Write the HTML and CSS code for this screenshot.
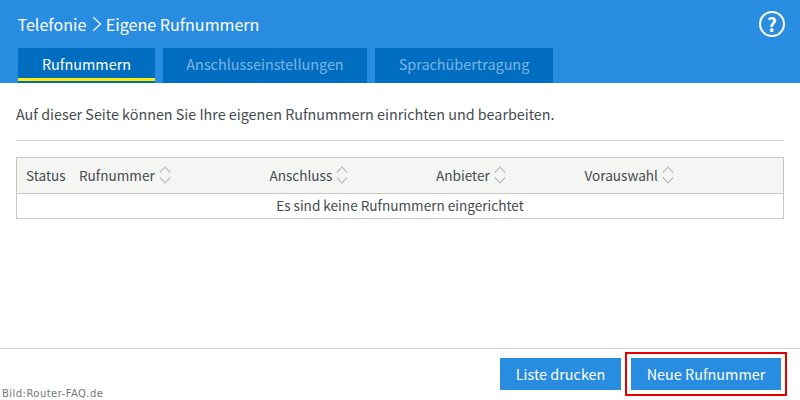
FILE: index.html
```html
<!DOCTYPE html>
<html lang="de">
<head>
<meta charset="utf-8">
<title>Eigene Rufnummern</title>
<link rel="stylesheet" href="styles.css">
</head>
<body>
<div class="page">
  <header class="header">
    <div class="title-row">
      <h1 class="title"><span>Telefonie</span><svg class="crumb" width="10" height="18" viewBox="0 0 10 18"><path d="M1 2 L8.5 9 L1 16" fill="none" stroke="#fff" stroke-width="1.1"/></svg><span>Eigene Rufnummern</span></h1>
      <span class="help">?</span>
    </div>
    <nav class="tabs">
      <a class="tab tab-active tab-a">Rufnummern</a>
      <a class="tab tab-b">Anschlusseinstellungen</a>
      <a class="tab tab-c">Sprachübertragung</a>
    </nav>
  </header>
  <main class="content">
    <p class="intro">Auf dieser Seite können Sie Ihre eigenen Rufnummern einrichten und bearbeiten.</p>
    <hr class="rule">
    <div class="table">
      <div class="thead">
        <span class="th th-status">Status</span>
        <span class="th th-nummer">Rufnummer<svg class="sort" width="12" height="18" viewBox="0 0 12 18"><path d="M.8 6.5 L6 1.2 L11.2 6.5 M.8 11.5 L6 16.8 L11.2 11.5" fill="none" stroke="#bdbdb8" stroke-width="1.2"/></svg></span>
        <span class="th th-anschluss">Anschluss<svg class="sort" width="12" height="18" viewBox="0 0 12 18"><path d="M.8 6.5 L6 1.2 L11.2 6.5 M.8 11.5 L6 16.8 L11.2 11.5" fill="none" stroke="#bdbdb8" stroke-width="1.2"/></svg></span>
        <span class="th th-anbieter">Anbieter<svg class="sort" width="12" height="18" viewBox="0 0 12 18"><path d="M.8 6.5 L6 1.2 L11.2 6.5 M.8 11.5 L6 16.8 L11.2 11.5" fill="none" stroke="#bdbdb8" stroke-width="1.2"/></svg></span>
        <span class="th th-vorauswahl">Vorauswahl<svg class="sort" width="12" height="18" viewBox="0 0 12 18"><path d="M.8 6.5 L6 1.2 L11.2 6.5 M.8 11.5 L6 16.8 L11.2 11.5" fill="none" stroke="#bdbdb8" stroke-width="1.2"/></svg></span>
      </div>
      <div class="empty">Es sind keine Rufnummern eingerichtet</div>
    </div>
  </main>
  <footer class="footer">
    <button class="btn btn-print">Liste drucken</button>
    <span class="highlight"><button class="btn btn-new">Neue Rufnummer</button></span>
    <span class="credit">Bild:Router-FAQ.de</span>
  </footer>
</div>
</body>
</html>
```
FILE: styles.css
```css
* { box-sizing: border-box; }
html, body { margin: 0; padding: 0; }
body {
  width: 800px;
  height: 400px;
  overflow: hidden;
  background: #fff;
  font-family: "Noto Sans CJK SC", "Noto Sans", sans-serif;
  color: #444b50;
}
.page { width: 800px; height: 400px; display: flex; flex-direction: column; }

.header { height: 83px; background: #288ce0; padding: 0 0 0 18px; display: flex; flex-direction: column; flex: none; }
.title-row { height: 48px; display: flex; align-items: center; justify-content: space-between; padding: 0 15px 1px 0; }
.title { margin: 0 0 0 -0.5px; font-size: 16.1px; line-height: 24px; font-weight: 400; color: #fff; display: flex; align-items: center; }
.crumb { margin: 0 4px 0 5.5px; }
.help { flex: none; width: 26px; height: 26px; border: 2px solid #fff; border-radius: 50%; color: #fff; font-size: 19px; line-height: 22px; font-weight: 700; text-align: center; }

.tabs { display: flex; gap: 8px; height: 35px; }
.tab { height: 35px; background: #006ec0; color: #7fb3e3; font-size: 14.4px; line-height: 31px; text-align: center; display: block; }
.tab-a { width: 137px; }
.tab-b { width: 204px; }
.tab-c { width: 178px; }
.tab-active { color: #fff; box-shadow: inset 0 -2px 0 #006ec0, inset 0 -5px 0 #ffea00; }

.content { flex: 1; padding: 0 16px; }
.intro { margin: 0; padding-top: 20px; height: 57px; font-size: 14.33px; line-height: 22px; }
.rule { margin: 0; border: 0; border-top: 1px solid #d4d4d0; height: 1px; }
.table { margin-top: 16px; border: 1px solid #c8c8c2; }
.thead { height: 36px; padding-bottom: 2px; background: #f5f5f3; border-bottom: 1px solid #c8c8c2; display: flex; align-items: center; font-size: 13.57px; }
.th { display: flex; align-items: center; flex: none; line-height: 20px; }
.th-status { width: 62px; padding-left: 9px; }
.th-nummer { width: 190.5px; }
.th-anschluss { width: 166.5px; }
.th-anbieter { width: 148.5px; }
.sort { margin-left: 4px; }
.empty { height: 24px; text-align: center; font-size: 13.58px; line-height: 22px; }

.footer { height: 52px; flex: none; border-top: 1px solid #d4d4d0; display: flex; justify-content: flex-end; align-items: flex-start; padding: 9px 19px 0 0; position: relative; }
.btn { border: 0; background: #288ce0; color: #fff; font-family: inherit; font-size: 14.4px; line-height: 22px; height: 32px; padding: 0; display: block; }
.btn-print { width: 121px; margin-right: 10px; }
.btn-new { width: 150px; }
.highlight { position: relative; display: block; }
.highlight::after { content: ""; position: absolute; left: -6px; right: -6px; top: -6px; bottom: -6px; border: 2px solid #e60000; }
.credit { position: absolute; left: 2px; top: 39px; font-family: "DejaVu Sans", sans-serif; font-size: 10px; line-height: 12px; letter-spacing: 0.45px; color: #777; }
```
